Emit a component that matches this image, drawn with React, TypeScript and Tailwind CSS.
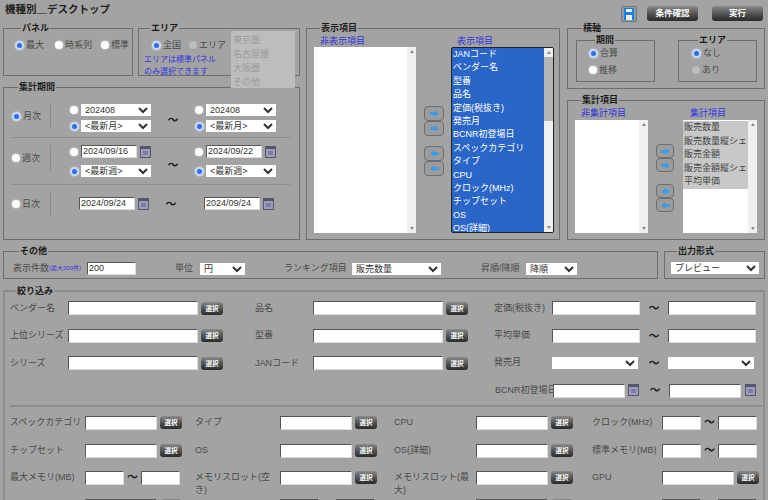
import type { ReactNode } from "react";

const PANEL_BORDER = "border border-[#6e6e6e]";

function Box({
  title,
  className,
  children,
}: {
  title: string;
  className: string;
  children?: ReactNode;
}) {
  return (
    <fieldset className={`${PANEL_BORDER} min-w-0 ${className}`}>
      <legend className="ml-[6px] px-px text-[9px] leading-[12px] font-bold whitespace-nowrap text-[#1c1c1c]">
        {title}
      </legend>
      {children}
    </fieldset>
  );
}

function Radio({
  name,
  checked,
  disabled,
}: {
  name: string;
  checked?: boolean;
  disabled?: boolean;
}) {
  return (
    <input
      type="radio"
      name={name}
      defaultChecked={checked}
      disabled={disabled}
      className="appearance-none shrink-0 size-[8px] rounded-full bg-white shadow-[0_0_2px_#e8e8e8] checked:size-[9px] checked:bg-[#2f6fe8] checked:border-2 checked:border-[#c4d8f8] disabled:bg-[#bdbdbd] disabled:shadow-none"
    />
  );
}

function RadioLabel({
  name,
  label,
  checked,
  disabled,
  className,
}: {
  name: string;
  label: string;
  checked?: boolean;
  disabled?: boolean;
  className?: string;
}) {
  return (
    <label
      className={`flex items-center gap-[2px] whitespace-nowrap text-[9px] leading-[12px] text-[#4a4a4a] ${className ?? ""}`}
    >
      <Radio name={name} checked={checked} disabled={disabled} />
      {label}
    </label>
  );
}

function Pick({ value, className }: { value?: string; className: string }) {
  return (
    <select
      defaultValue={value}
      className={`bg-white text-[9px] text-[#333] pl-0 ${className}`}
    >
      <option>{value}</option>
    </select>
  );
}

function TextBox({ value, className }: { value?: string; className: string }) {
  return (
    <input
      type="text"
      defaultValue={value}
      className={`bg-white border border-[#555] border-r-[#ddd] border-b-[#ddd] px-[1px] text-[9px] text-[#333] outline-none ${className}`}
    />
  );
}

function CalendarIcon() {
  return (
    <svg viewBox="0 0 11 12" className="w-[11px] h-[12px] shrink-0">
      <rect x="0.5" y="0.5" width="10" height="11" fill="#9d9db8" stroke="#55556f" />
      <rect x="1" y="1" width="9" height="2" fill="#55556f" />
      <rect x="3" y="5" width="5" height="4" fill="#7d7da8" />
    </svg>
  );
}

function Tilde({ className }: { className: string }) {
  return (
    <span className={`text-center text-[11px] leading-[12px] font-bold text-[#222] ${className}`}>
      ～
    </span>
  );
}

function GrayButton({ label, className }: { label: string; className: string }) {
  return (
    <button
      type="button"
      className={`rounded-[3px] bg-gradient-to-b from-[#8a8a8a] via-[#555] to-[#2a2a2a] font-semibold text-white ${className}`}
    >
      {label}
    </button>
  );
}

function SelectButton({ className = "w-[22px]" }: { className?: string }) {
  return (
    <GrayButton
      label="選択"
      className={`h-[13px] shrink-0 text-[6.5px] leading-[13px] ${className}`}
    />
  );
}

function ArrowButton({ left, className }: { left?: boolean; className: string }) {
  return (
    <button
      type="button"
      className={`flex items-center justify-center rounded-[4px] border border-[#6e6e6e] bg-[#9c9c9c] ${className}`}
    >
      <svg viewBox="0 0 10 8" className="w-[9px] h-[7px]">
        <path
          d={left ? "M0 4 5 0V2.2H10V5.8H5V8Z" : "M10 4 5 0V2.2H0V5.8H5V8Z"}
          fill="#3d9be8"
        />
      </svg>
    </button>
  );
}

function ScrollBar({ thumb }: { thumb?: string }) {
  return (
    <div className="flex w-[9px] shrink-0 flex-col items-center justify-between bg-[#f0f0f0] py-[3px] relative">
      {thumb && <div className={`absolute inset-x-0 top-[9px] bg-[#b5b5b5] ${thumb}`} />}
      <span className="border-x-[2px] border-b-[3px] border-x-transparent border-b-[#8a8a8a]" />
      <span className="border-x-[2px] border-t-[3px] border-x-transparent border-t-[#8a8a8a]" />
    </div>
  );
}

function ListHead({ children, className }: { children: string; className: string }) {
  return (
    <div className={`text-[9px] leading-[12px] text-[#3333dd] ${className}`}>{children}</div>
  );
}

const SHOWN_ITEMS = [
  "JANコード",
  "ベンダー名",
  "型番",
  "品名",
  "定価(税抜き)",
  "発売月",
  "BCNR初登場日",
  "スペックカテゴリ",
  "タイプ",
  "CPU",
  "クロック(MHz)",
  "チップセット",
  "OS",
  "OS(詳細)",
];

const TOTAL_ITEMS = ["販売数量", "販売数量縦シェア", "販売金額", "販売金額縦シェア", "平均単価"];

function PeriodPicks({
  name,
  latest,
  month,
  date,
  gap,
}: {
  name: string;
  latest: string;
  month?: string;
  date?: string;
  gap: string;
}) {
  return (
    <div className="flex w-[81px] flex-col">
      <div className={`flex h-[13px] items-center gap-[2px] ${gap}`}>
        <Radio name={name} />
        {date ? (
          <>
            <TextBox value={date} className="ml-px h-[13px] w-[56px]" />
            <span className="ml-px">
              <CalendarIcon />
            </span>
          </>
        ) : (
          <Pick value={month} className="ml-px h-[12px] w-[70px]" />
        )}
      </div>
      <div className="flex h-[12px] items-center gap-[2px]">
        <Radio name={name} checked />
        <Pick value={latest} className="h-[12px] w-[70px]" />
      </div>
    </div>
  );
}

function PeriodRow({
  label,
  checked,
  latest,
  month,
  from,
  to,
  gap,
  className,
}: {
  label: string;
  checked?: boolean;
  latest: string;
  month?: string;
  from?: string;
  to?: string;
  gap: string;
  className: string;
}) {
  return (
    <div className={`flex border-b border-[#8c8c8c] ${className}`}>
      <div className="flex h-[26px] w-[39px] items-center border-r border-[#8c8c8c]">
        <RadioLabel name="period" label={label} checked={checked} />
      </div>
      <div className="ml-[19px] flex items-start">
        <PeriodPicks name={`${label}-from`} latest={latest} month={month} date={from} gap={gap} />
        <Tilde className="w-[44px] self-center" />
        <PeriodPicks name={`${label}-to`} latest={latest} month={month} date={to} gap={gap} />
      </div>
    </div>
  );
}

function DayRow() {
  return (
    <div className="flex pt-[7px]">
      <div className="flex h-[24px] w-[39px] items-center border-r border-[#8c8c8c]">
        <RadioLabel name="period" label="日次" />
      </div>
      <div className="ml-[28px] flex items-center self-start pt-[5px]">
        <TextBox value="2024/09/24" className="h-[13px] w-[56px]" />
        <span className="ml-[3px]">
          <CalendarIcon />
        </span>
        <Tilde className="w-[44px]" />
        <span className="w-[11px]" />
        <TextBox value="2024/09/24" className="h-[13px] w-[56px]" />
        <span className="ml-[3px]">
          <CalendarIcon />
        </span>
      </div>
    </div>
  );
}

function ItemLabel({ children, className }: { children: string; className: string }) {
  return (
    <span className={`shrink-0 text-[9px] leading-[13px] text-[#4a4a4a] ${className}`}>
      {children}
    </span>
  );
}

function NameField({ label, gap }: { label: string; gap: string }) {
  return (
    <div className={`flex items-center ${gap}`}>
      <ItemLabel className="w-[58px] whitespace-nowrap">{label}</ItemLabel>
      <TextBox className="h-[14px] w-[130px]" />
      <span className="ml-[3px] flex">
        <SelectButton />
      </span>
    </div>
  );
}

function RangeField({ label }: { label: string }) {
  return (
    <div className="flex items-center">
      <ItemLabel className="w-[58px] whitespace-nowrap">{label}</ItemLabel>
      <TextBox className="h-[14px] w-[88px]" />
      <Tilde className="w-[28px]" />
      <TextBox className="h-[14px] w-[88px]" />
    </div>
  );
}

function SpecPick({ label }: { label: string }) {
  return (
    <>
      <ItemLabel className="">{label}</ItemLabel>
      <div className="flex items-start gap-[3px]">
        <TextBox className="h-[14px] w-[72px]" />
        <SelectButton />
      </div>
    </>
  );
}

function SpecRange({ label }: { label: string }) {
  return (
    <>
      <ItemLabel className="">{label}</ItemLabel>
      <div className="flex items-start">
        <TextBox className="h-[14px] w-[39px]" />
        <Tilde className="w-[17px]" />
        <TextBox className="h-[14px] w-[39px]" />
      </div>
    </>
  );
}

export default function App() {
  return (
    <div className="h-[500px] w-[768px] overflow-hidden bg-[#a3a3a3] pl-[3px] font-['Liberation_Sans','Noto_Sans_CJK_JP',sans-serif]">
      <header className="flex h-[22px] items-center justify-between pr-[5px]">
        <h1 className="ml-[2px] mt-[-4px] text-[10.5px] leading-[16px] font-bold text-[#222]">
          機種別＿デスクトップ
        </h1>
        <div className="flex items-center pt-[5px]">
          <button
            type="button"
            className="flex size-[16px] items-center justify-center rounded-[2px] border border-[#777] bg-[#8f9aa8]"
          >
            <svg viewBox="0 0 10 12" className="h-[12px] w-[10px]">
              <rect width="10" height="12" fill="#1f7fe0" />
              <rect x="2" y="1" width="6" height="3" fill="#e6f1fb" />
              <rect x="2" y="7" width="6" height="5" fill="#e6f1fb" />
            </svg>
          </button>
          <GrayButton label="条件確認" className="ml-[10px] h-[15px] w-[51px] text-[8.5px] leading-[15px]" />
          <GrayButton label="実行" className="ml-[14px] h-[15px] w-[51px] text-[8.5px] leading-[15px]" />
        </div>
      </header>

      <div className="flex">
        <div className="flex w-[297px] flex-col gap-[5px]">
          <div className="flex gap-[5px]">
            <Box title="パネル" className="h-[54px] w-[130px] pl-[11px] pt-[5px]">
              <div className="flex">
                <RadioLabel name="panel" label="最大" checked className="w-[40px]" />
                <RadioLabel name="panel" label="時系列" className="w-[46px]" />
                <RadioLabel name="panel" label="標準" />
              </div>
            </Box>
            <Box title="エリア" className="relative h-[54px] w-[162px] pl-[5px] pt-[5px]">
              <div className="flex pl-[8px]">
                <RadioLabel name="area" label="全国" checked className="w-[37px]" />
                <RadioLabel name="area" label="エリア" disabled />
              </div>
              <p className="mt-[3px] whitespace-nowrap text-[8px] leading-[12px] text-[#3333dd]">
                エリアは標準パネル
                <br />
                のみ選択できます
              </p>
              <ul className="absolute left-[92px] top-[-3px] z-10 h-[57px] w-[64px] bg-[#bdbdbd] pl-[2px] pt-[2px] text-[9px] leading-[14px] text-[#9a9a9a]">
                <li>東京圏</li>
                <li>名古屋圏</li>
                <li>大阪圏</li>
                <li>その他</li>
              </ul>
            </Box>
          </div>
          <Box title="集計期間" className="h-[159px] w-[297px] pl-[8px] pr-[9px] pt-[3px]">
            <PeriodRow
              label="月次"
              checked
              latest="<最新月>"
              month="202408"
              gap="mb-[4px]"
              className="h-[42px] pt-[7px]"
            />
            <PeriodRow
              label="週次"
              latest="<最新週>"
              from="2024/09/16"
              to="2024/09/22"
              gap="mb-[7px]"
              className="h-[47px] pt-[7px]"
            />
            <DayRow />
          </Box>
        </div>

        <Box title="表示項目" className="ml-[6px] h-[218px] w-[254px] pl-[7px] pr-[4px]">
          <div className="flex h-[13px] items-center">
            <ListHead className="ml-[6px] w-[137px]">非表示項目</ListHead>
            <ListHead className="">表示項目</ListHead>
          </div>
          <div className="flex h-[186px]">
            <div className="flex w-[102px] justify-end bg-white">
              <ScrollBar />
            </div>
            <div className="ml-[8px] mr-[7px] flex w-[20px] flex-col pt-[59px]">
              <ArrowButton className="h-[15px]" />
              <ArrowButton className="h-[15px]" />
              <ArrowButton left className="mt-[10px] h-[15px]" />
              <ArrowButton left className="h-[15px]" />
            </div>
            <div className="flex w-[103px] overflow-hidden rounded-[2px] border border-[#222] bg-[#2a66c8]">
              <ul className="min-w-0 flex-1 pl-[1px] text-[9px] leading-[13.4px] text-white">
                {SHOWN_ITEMS.map((item) => (
                  <li key={item} className="whitespace-nowrap">
                    {item}
                  </li>
                ))}
              </ul>
              <ScrollBar thumb="h-[64px]" />
            </div>
          </div>
        </Box>

        <div className="ml-[7px] flex w-[198px] flex-col gap-[5px]">
          <Box title="横軸" className="h-[67px] w-[198px] pl-[8px]">
            <div className="flex gap-[23px]">
              <Box title="期間" className="h-[48px] w-[79px] pl-[12px]">
                <RadioLabel name="period-axis" label="合算" checked className="mt-[1px]" />
                <RadioLabel name="period-axis" label="推移" className="mt-[5px]" />
              </Box>
              <Box title="エリア" className="h-[48px] w-[79px] pl-[13px]">
                <RadioLabel name="area-axis" label="なし" checked className="mt-[1px]" />
                <RadioLabel name="area-axis" label="あり" disabled className="mt-[5px]" />
              </Box>
            </div>
          </Box>
          <Box title="集計項目" className="h-[146px] w-[198px] pl-[7px]">
            <div className="flex h-[14px] items-center">
              <ListHead className="ml-[6px] w-[109px]">非集計項目</ListHead>
              <ListHead className="">集計項目</ListHead>
            </div>
            <div className="flex h-[113px]">
              <div className="flex w-[73px] justify-end bg-white">
                <ScrollBar />
              </div>
              <div className="ml-[8px] mr-[9px] flex w-[18px] flex-col pt-[24px]">
                <ArrowButton className="h-[14px]" />
                <ArrowButton className="h-[14px]" />
                <ArrowButton left className="mt-[12px] h-[14px]" />
                <ArrowButton left className="h-[14px]" />
              </div>
              <div className="flex w-[74px] bg-white">
                <ul className="min-w-0 flex-1 pt-px text-[9px] leading-[13.6px] text-[#444]">
                  {TOTAL_ITEMS.map((item) => (
                    <li key={item} className="overflow-hidden whitespace-nowrap bg-[#c8c8c8] pl-[1px]">
                      {item}
                    </li>
                  ))}
                </ul>
                <ScrollBar />
              </div>
            </div>
          </Box>
        </div>
      </div>

      <div className="mt-[5px] flex gap-[6px]">
        <Box title="その他" className="h-[34px] w-[655px] pl-[9px] pt-[5px]">
          <div className="flex items-center whitespace-nowrap">
            <ItemLabel className="w-[36px]">表示件数</ItemLabel>
            <span className="w-[38px] text-[6px] text-[#3333dd]">(最大200件)</span>
            <TextBox value="200" className="h-[13px] w-[49px]" />
            <ItemLabel className="ml-[39px] w-[25px]">単位</ItemLabel>
            <Pick value="円" className="h-[12px] w-[45px]" />
            <ItemLabel className="ml-[39px] w-[68px]">ランキング項目</ItemLabel>
            <Pick value="販売数量" className="h-[12px] w-[89px]" />
            <ItemLabel className="ml-[40px] w-[45px]">昇順/降順</ItemLabel>
            <Pick value="降順" className="h-[12px] w-[51px]" />
          </div>
        </Box>
        <Box title="出力形式" className="h-[34px] w-[101px] pl-[6px] pt-[5px]">
          <Pick value="プレビュー" className="block h-[12px] w-[88px]" />
        </Box>
      </div>

      <Box title="絞り込み" className="mt-[6px] w-[762px] border-2 border-[#8c8c8c] pl-[5px] pr-[1px]">
        <div className="flex h-[110px] flex-col justify-start border-b-2 border-[#8c8c8c] pt-[4px]">
          <div className="flex h-[27.5px] items-start">
            <NameField label="ベンダー名" gap="mr-[32px]" />
            <NameField label="品名" gap="mr-[26px]" />
            <RangeField label="定価(税抜き)" />
          </div>
          <div className="flex h-[27.5px] items-start">
            <NameField label="上位シリーズ" gap="mr-[32px]" />
            <NameField label="型番" gap="mr-[26px]" />
            <RangeField label="平均単価" />
          </div>
          <div className="flex h-[27.5px] items-start">
            <NameField label="シリーズ" gap="mr-[32px]" />
            <NameField label="JANコード" gap="mr-[26px]" />
            <div className="flex items-center">
              <ItemLabel className="w-[58px]">発売月</ItemLabel>
              <Pick className="h-[12px] w-[86px]" />
              <span className="w-[2px]" />
              <Tilde className="w-[28px]" />
              <Pick className="h-[12px] w-[86px]" />
            </div>
          </div>
          <div className="flex items-start pl-[485px]">
            <ItemLabel className="w-[58px] text-[8.5px] whitespace-nowrap">BCNR初登場日</ItemLabel>
            <TextBox className="h-[14px] w-[72px]" />
            <span className="ml-[3px]">
              <CalendarIcon />
            </span>
            <Tilde className="ml-[2px] w-[28px]" />
            <TextBox className="h-[14px] w-[72px]" />
            <span className="ml-[4px]">
              <CalendarIcon />
            </span>
          </div>
        </div>
        <div className="mt-[9px] grid grid-cols-[75px_110px_85px_114px_82px_116px_70px_100px] auto-rows-[27.5px] items-start">
          <SpecPick label="スペックカテゴリ" />
          <SpecPick label="タイプ" />
          <SpecPick label="CPU" />
          <SpecRange label="クロック(MHz)" />
          <SpecPick label="チップセット" />
          <SpecPick label="OS" />
          <SpecPick label="OS(詳細)" />
          <SpecRange label="標準メモリ(MB)" />
          <SpecRange label="最大メモリ(MB)" />
          <SpecPick label="メモリスロット(空き)" />
          <SpecPick label="メモリスロット(最大)" />
          <SpecPick label="GPU" />
          <SpecPick label="" />
          <SpecRange label="" />
          <SpecPick label="" />
          <SpecRange label="" />
        </div>
      </Box>
    </div>
  );
}
